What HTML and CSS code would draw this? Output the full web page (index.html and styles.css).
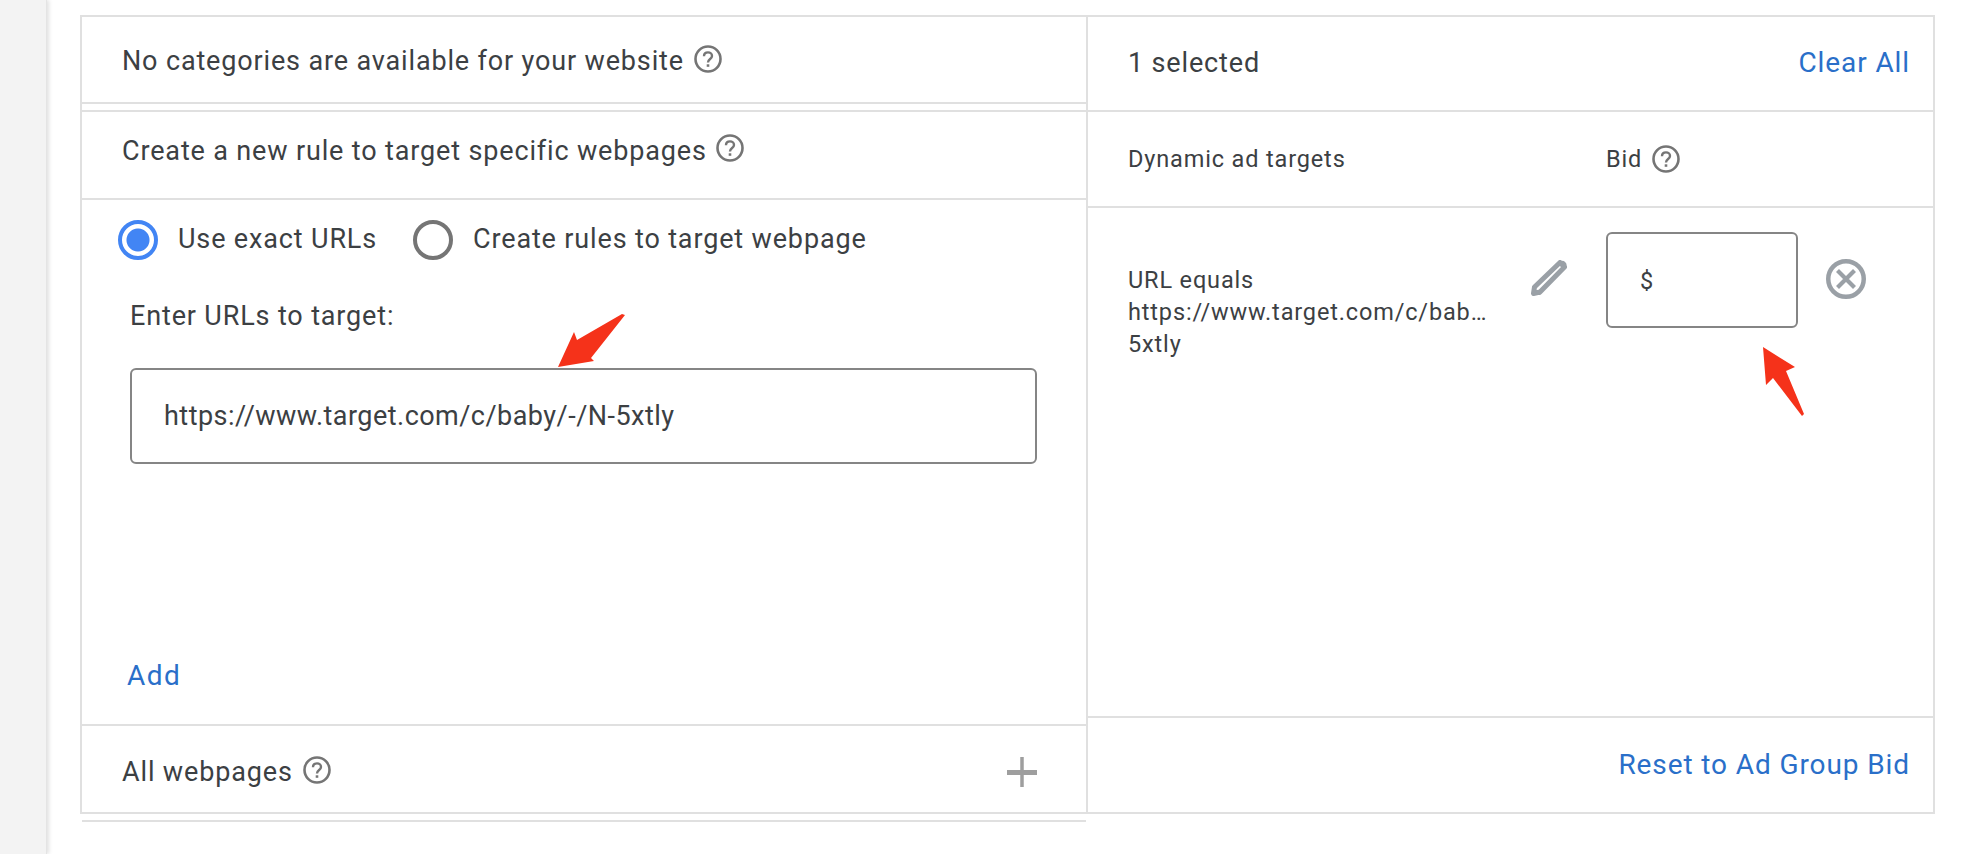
FILE: index.html
```html
<!DOCTYPE html>
<html lang="en">
<head>
<meta charset="utf-8">
<title>Dynamic ad targets</title>
<link rel="stylesheet" href="styles.css">
</head>
<body>
<div class="page">
  <aside class="rail"></aside>
  <main class="main">
    <div class="panel">
      <section class="left">
        <div class="head head-first">
          <span>No categories are available for your website</span>
          <svg class="help" viewBox="0 0 28 28"><use href="#help"/></svg>
        </div>
        <div class="spacer"></div>
        <div class="head head-second">
          <span>Create a new rule to target specific webpages</span>
          <svg class="help help-tight" viewBox="0 0 28 28"><use href="#help"/></svg>
        </div>
        <div class="rule">
          <div class="radios">
            <label class="radio"><span class="dot on"></span><span class="radio-text">Use exact URLs</span></label>
            <label class="radio"><span class="dot"></span><span class="radio-text">Create rules to target webpage</span></label>
          </div>
          <div class="enter">Enter URLs to target:</div>
          <div class="urlbox">https://www.target.com/c/baby/-/N-5xtly</div>
          <a class="link add">Add</a>
        </div>
        <div class="head head-last">
          <span>All webpages</span>
          <svg class="help" viewBox="0 0 28 28"><use href="#help"/></svg>
          <svg class="plus" viewBox="0 0 30 30"><path class="plus-h" d="M0 15.500H30"/><path class="plus-v" d="M15 0V30"/></svg>
        </div>
      </section>
      <section class="right">
        <div class="sel">
          <span>1 selected</span>
          <a class="link">Clear All</a>
        </div>
        <div class="cols">
          <span class="col-name">Dynamic ad targets</span>
          <span class="col-bid">Bid <svg class="help help-sm" viewBox="0 0 28 28"><use href="#help"/></svg></span>
        </div>
        <div class="row">
          <div class="target">URL equals<br>https://www.target.com/c/bab…<br>5xtly</div>
          <svg class="pencil" viewBox="0 0 36 36"><path d="M29 2.500 33.500 7 9 32 2.500 33.500 3.500 27Z" fill="none" stroke="#9aa0a6" stroke-width="5" stroke-linejoin="round"/><path d="M27 3.500 32.500 9 35 6.500C36 5 35.500 3.500 34.500 2.500L33.500 1.500C32.500 .5 31 .5 30 1.500Z" fill="#9aa0a6"/><path d="M1 26 10 35H1Z" fill="#9aa0a6"/></svg>
          <div class="bid">$</div>
          <svg class="clear" viewBox="0 0 40 40"><circle cx="20" cy="20" r="17.750" fill="none" stroke="#9aa0a6" stroke-width="4.500"/><path d="M11.500 11.500 28.500 28.500M28.500 11.500 11.500 28.500" stroke="#9aa0a6" stroke-width="4.200"/></svg>
        </div>
        <div class="foot"><a class="link">Reset to Ad Group Bid</a></div>
      </section>
    </div>
    <div class="tail"></div>
  </main>
</div>

<svg class="arrow" viewBox="0 0 1964 854">
  <path d="M558 367 574 332 577 340 622 314 625 315 591 358 594 361Z"/>
  <path d="M1763 347 1795 367 1786 371 1804 414 1802 416 1773 378 1766 385Z"/>
</svg>

<svg class="defs" width="0" height="0">
  <defs>
    <g id="help" fill="none" stroke="#757575">
      <circle cx="14" cy="14" r="12.500" stroke-width="2.600"/>
      <path d="M10 11.200C10 8.800 11.800 7.400 14 7.400S18 8.800 18 11C18 14 14 14 14 17.500" stroke-width="2.400"/>
      <path d="M14 19.300V21.800" stroke-width="2.600"/>
    </g>
  </defs>
</svg>
</body>
</html>
```

FILE: styles.css
```css
* { box-sizing: border-box; }
html, body { margin: 0; height: 100%; }
body {
  background: #fff;
  color: #3c4043;
  font-family: Roboto, "Liberation Sans", sans-serif;
  font-size: 27px;
  letter-spacing: 0.85px;
  overflow: hidden;
}
.page { display: flex; height: 854px; }
.rail {
  width: 47px;
  flex: none;
  background: #f3f3f3;
  border-right: 1px solid #e4e4e4;
  box-shadow: 2px 0 4px rgba(0,0,0,.12);
}
.main { flex: 1; padding: 15px 29px 0 33px; }
.panel {
  display: flex;
  height: 799px;
  border: 2px solid #e0e0e0;
}
.left {
  width: 1006px;
  flex: none;
  display: flex;
  flex-direction: column;
  border-right: 2px solid #e0e0e0;
}
.right { flex: 1; display: flex; flex-direction: column; }
.head {
  display: flex;
  align-items: center;
  padding-left: 40px;
  border-bottom: 2px solid #e0e0e0;
}
.head-first { height: 87px; padding-top: 3px; }
.spacer { height: 8px; border-bottom: 2px solid #e0e0e0; }
.head-second { height: 88px; padding-bottom: 9px; }
.head-last { height: 86px; border-bottom: 0; flex: none; margin-top: auto; padding-right: 49px; padding-top: 6px; }
.help { width: 28px; height: 28px; margin-left: 10px; position: relative; top: -2px; flex: none; }
.help-tight { margin-left: 9px; top: -3px; }
.plus { width: 30px; height: 30px; margin-left: auto; fill: none; stroke: #9e9e9e; }
.plus-h { stroke-width: 5px; }
.plus-v { stroke-width: 3.500px; }
.rule {
  flex: 1;
  display: flex;
  flex-direction: column;
  border-bottom: 2px solid #e0e0e0;
}
.radios { display: flex; padding: 20px 0 0 36px; gap: 36px; }
.radio { display: flex; align-items: center; gap: 20px; height: 40px; }
.radio-text { position: relative; top: -1px; }
.dot {
  width: 40px;
  height: 40px;
  border-radius: 50%;
  border: 4px solid #757575;
  flex: none;
}
.dot.on {
  border-color: #4285f4;
  background: radial-gradient(circle, #4285f4 0 11px, #fff 12px);
}
.enter { margin: 39px 0 0 48px; line-height: 34px; }
.urlbox {
  margin: 35px 0 0 48px;
  width: 907px;
  height: 96px;
  border: 2px solid #858585;
  border-radius: 6px;
  padding-left: 32px;
  display: flex;
  align-items: center;
  letter-spacing: 0.47px;
}
.link { color: #2a6fc9; font-size: 28px; letter-spacing: 0.9px; }
.add { margin: 195px 0 0 45px; line-height: 34px; letter-spacing: 1.5px; }
.sel {
  height: 95px;
  flex: none;
  display: flex;
  align-items: center;
  justify-content: space-between;
  padding: 0 23px 2px 40px;
  border-bottom: 2px solid #e0e0e0;
}
.cols {
  height: 96px;
  flex: none;
  display: flex;
  align-items: center;
  padding-left: 40px;
  border-bottom: 2px solid #e0e0e0;
  font-size: 23.500px;
  letter-spacing: 0.85px;
}
.col-name { width: 478px; }
.col-bid { display: flex; align-items: center; gap: 10px; }
.help-sm { margin: 0; top: 0; }
.row {
  flex: 1;
  display: flex;
  align-items: flex-start;
  padding: 24px 0 0 40px;
  font-size: 23.500px;
  letter-spacing: 0.85px;
  border-bottom: 2px solid #e0e0e0;
}
.target { width: 403px; padding-top: 32px; line-height: 32px; white-space: nowrap; }
.pencil { width: 36px; height: 36px; margin-top: 28px; flex: none; }
.bid {
  width: 192px;
  height: 96px;
  margin-left: 39px;
  flex: none;
  border: 2px solid #858585;
  border-radius: 6px;
  padding: 33px 0 0 32px;
  line-height: 28px;
}
.clear { width: 40px; height: 40px; margin: 27px 0 0 28px; flex: none; }
.foot {
  height: 94px;
  flex: none;
  display: flex;
  align-items: center;
  justify-content: flex-end;
  padding: 0 23px 2px 0;
}
.tail { width: 1004px; margin-left: 2px; height: 2px; margin-top: 6px; background: #e0e0e0; }
.arrow { position: absolute; left: 0; top: 0; width: 1964px; height: 854px; fill: #f5321a; pointer-events: none; }
.defs { position: absolute; }
```
